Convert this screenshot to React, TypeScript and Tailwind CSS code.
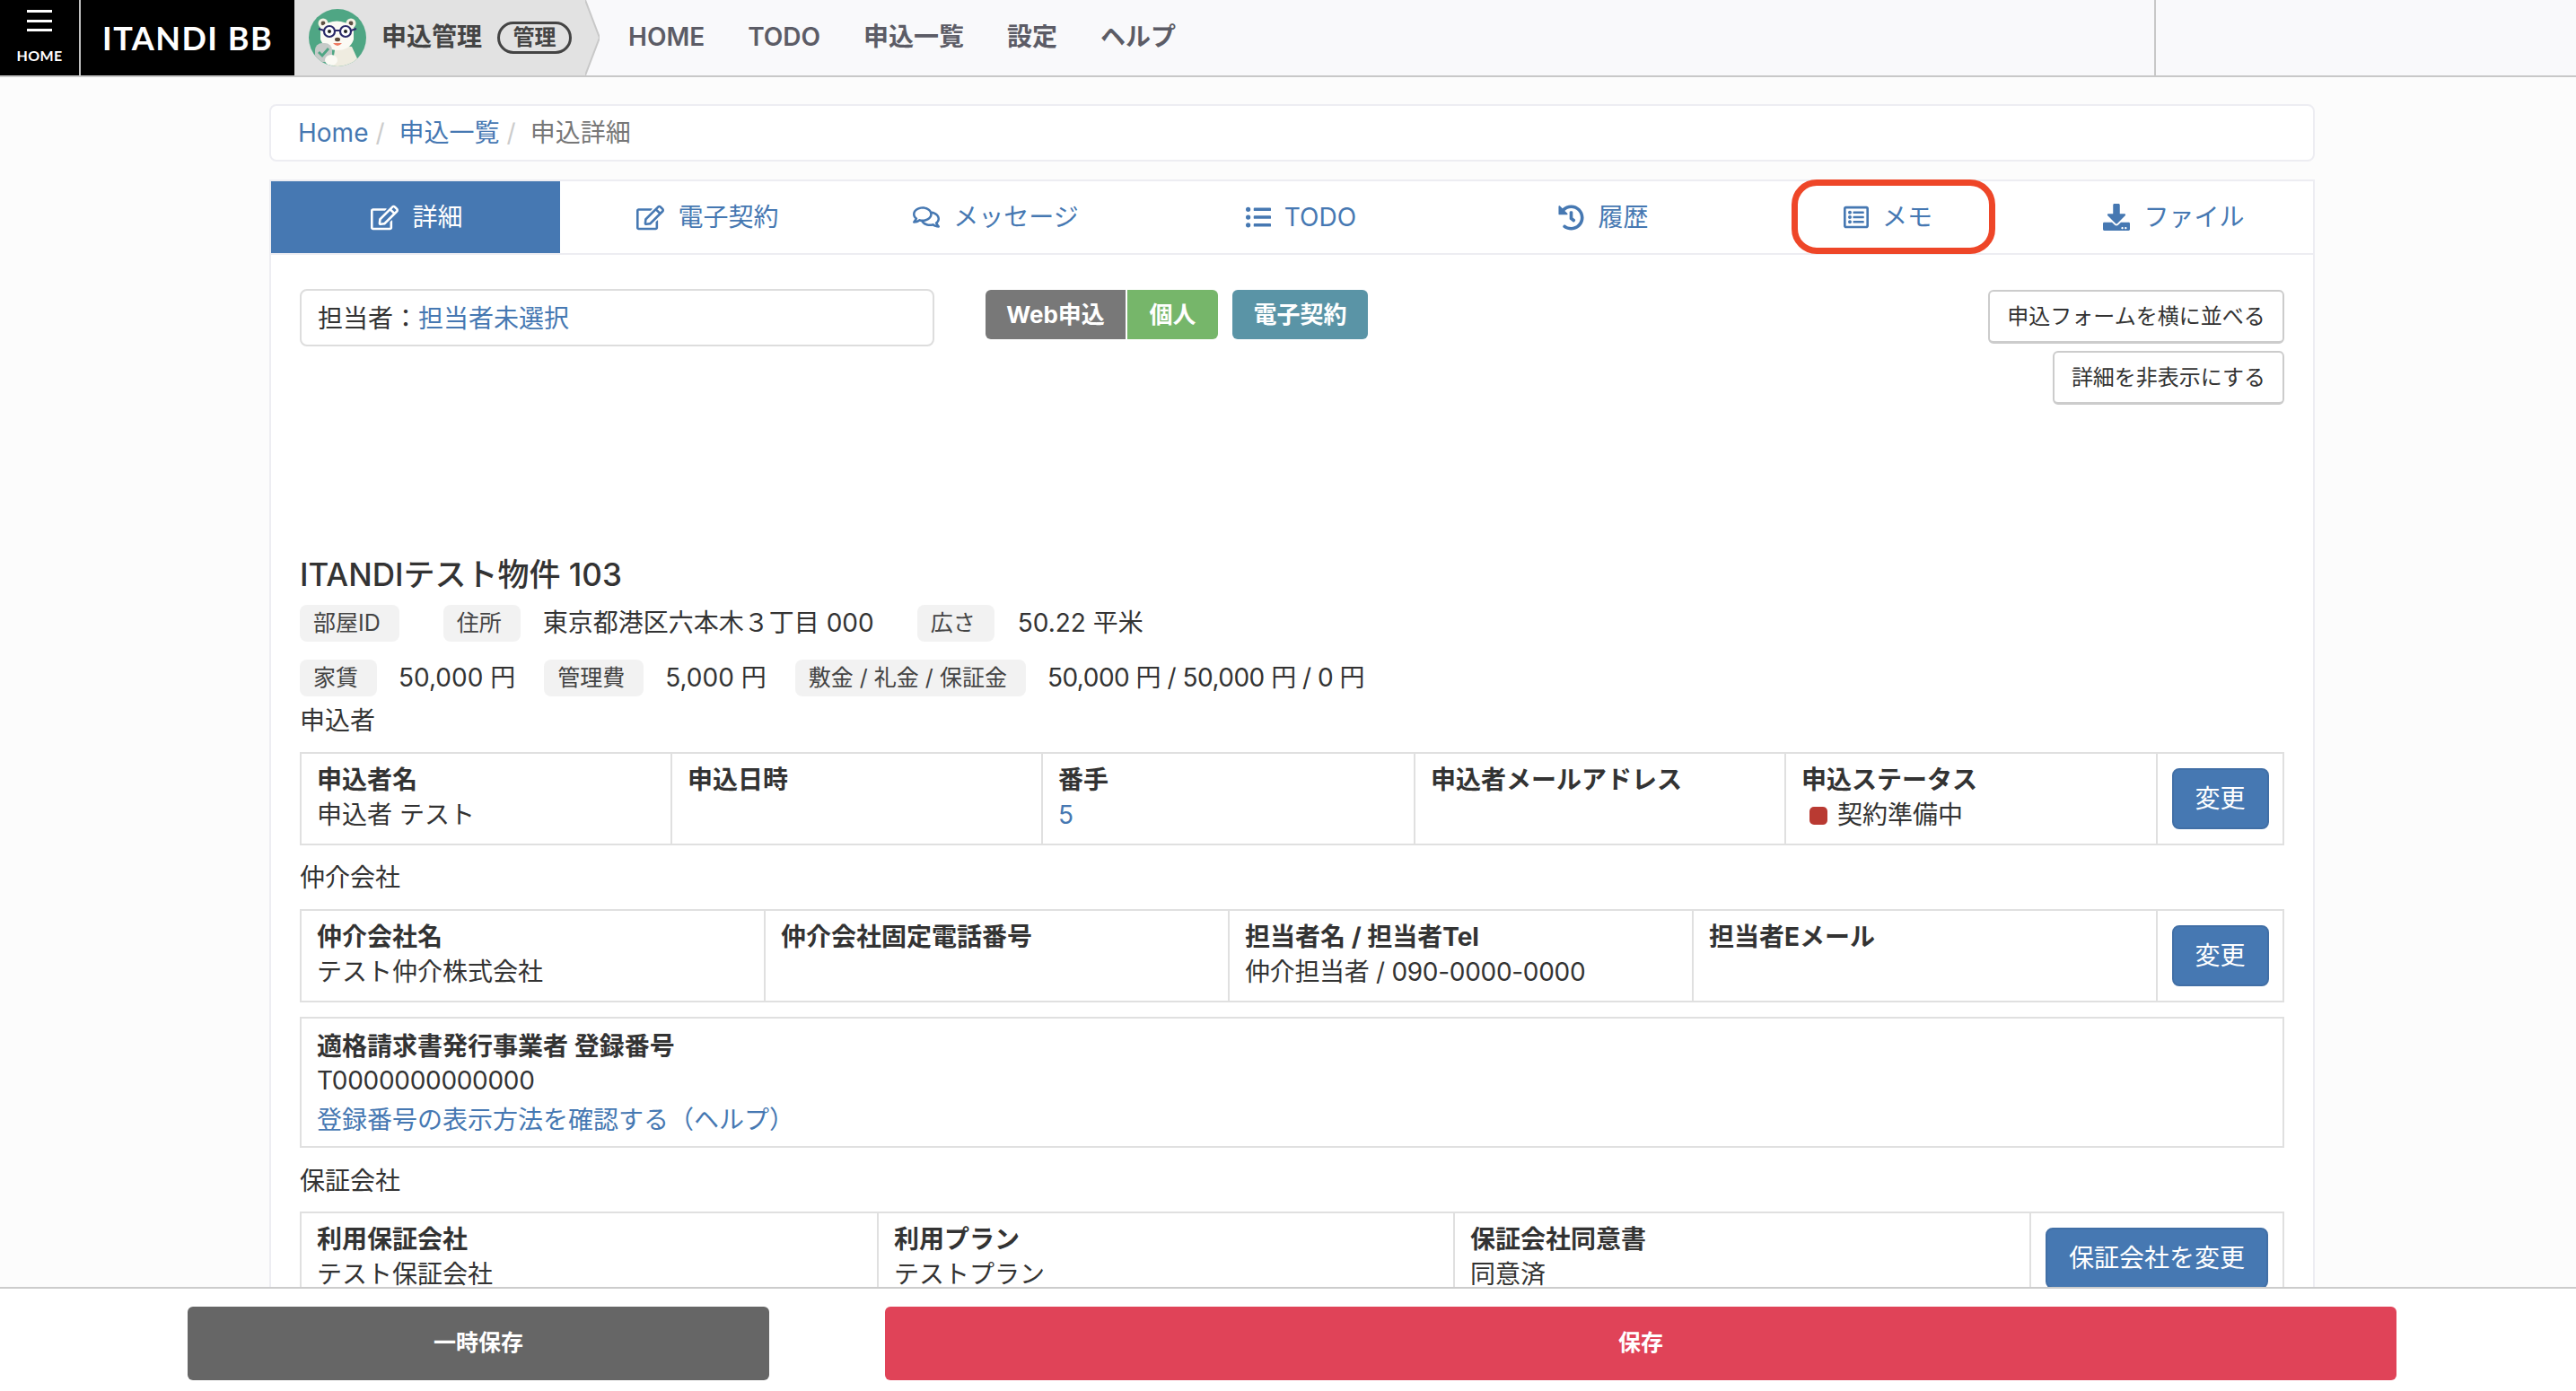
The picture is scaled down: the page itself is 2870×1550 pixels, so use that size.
import React from "react";
import { FaRegEdit, FaRegComments, FaListUl, FaHistory, FaRegListAlt, FaDownload } from "react-icons/fa";

const font = "font-['Inter','Noto_Sans_CJK_JP',sans-serif]";

function Bear() {
  return (
    <svg viewBox="0 0 64 64" className="w-[64px] h-[64px] shrink-0">
      <defs>
        <clipPath id="c"><circle cx="32" cy="32" r="32" /></clipPath>
      </defs>
      <g clipPath="url(#c)">
        <rect width="64" height="64" fill="#4fa684" />
        <path d="M30 40 L48 42 L58 64 L26 64 Z" fill="#efece0" />
        <circle cx="16" cy="16" r="5.5" fill="#f4f1e4" />
        <circle cx="16" cy="16" r="2.4" fill="#5c4f42" />
        <circle cx="47" cy="16" r="5.5" fill="#f4f1e4" />
        <circle cx="47" cy="16" r="2.4" fill="#5c4f42" />
        <path d="M13 20 Q31 7 50 20 L50 34 Q46 46 32 46 Q18 46 13 34 Z" fill="#fbfaf4" />
        <circle cx="23" cy="25" r="6" fill="#fff" stroke="#2b2a6a" strokeWidth="2.2" />
        <circle cx="41" cy="25" r="6" fill="#fff" stroke="#2b2a6a" strokeWidth="2.2" />
        <path d="M29 24 H35 M11 22 L17 24 M47 24 L53 22" stroke="#2b2a6a" strokeWidth="2" fill="none" />
        <circle cx="23" cy="25" r="2" fill="#222" />
        <circle cx="41" cy="25" r="2" fill="#222" />
        <ellipse cx="32" cy="34" rx="3" ry="2.2" fill="#5c4a3c" />
        <path d="M27 38 Q32 44 37 38 Z" fill="#ee7a62" />
        <rect x="7" y="38" width="19" height="21" rx="8" fill="#c6cac8" />
        <path d="M11 48 L15 52 L22 44" stroke="#4fa684" strokeWidth="2.8" fill="none" />
        <ellipse cx="25" cy="57" rx="7" ry="6" fill="#fbfaf4" />
      </g>
    </svg>
  );
}

function Tag({ children }: { children: React.ReactNode }) {
  return (
    <span className="h-[41px] flex items-center pl-[15px] pr-[21px] pt-[2px] rounded-[8px] bg-[#f2f2f2] text-[25px] text-[#444] whitespace-nowrap">
      {children}
    </span>
  );
}

function Val({ children, className = "" }: { children: React.ReactNode; className?: string }) {
  return <span className={"text-[28px] text-[#333] whitespace-nowrap " + className}>{children}</span>;
}

function Cell({ title, children, className }: { title: string; children?: React.ReactNode; className: string }) {
  return (
    <div className={"px-[17px] pt-[10px] border-r-2 border-[#e0e0e0] leading-[39px] " + className}>
      <div className="font-bold text-[28px] text-[#333] whitespace-nowrap">{title}</div>
      {children && <div className="text-[28px] text-[#333] whitespace-nowrap">{children}</div>}
    </div>
  );
}

function BlueBtn({ children, className }: { children: React.ReactNode; className: string }) {
  return (
    <button className={"rounded-[8px] bg-[#4678b2] border-2 border-[#416fa6] text-white text-[28px] " + className}>
      {children}
    </button>
  );
}

const tabs = [
  { label: "詳細", icon: <FaRegEdit className="text-[31px]" />, active: true },
  { label: "電子契約", icon: <FaRegEdit className="text-[31px]" /> },
  { label: "メッセージ", icon: <FaRegComments className="text-[30px]" /> },
  { label: "TODO", icon: <FaListUl className="text-[28px]" /> },
  { label: "履歴", icon: <FaHistory className="text-[29px]" /> },
  { label: "メモ", icon: <FaRegListAlt className="text-[28px]" />, mark: true },
  { label: "ファイル", icon: <FaDownload className="text-[30px]" /> },
];

export default function App() {
  return (
    <div className={"h-screen flex flex-col overflow-hidden bg-[#fcfcfc] text-[#333] " + font}>
      <header className="h-[86px] shrink-0 flex bg-[#f9f9fb] border-b-2 border-[#c8c8c8]">
        <div className="w-[90px] flex flex-col items-center bg-black border-r-2 border-[#c0c0c0]">
          <div className="mt-[11px] w-[28px] flex flex-col gap-[7.5px]">
            <div className="h-[3px] bg-white" />
            <div className="h-[3px] bg-white" />
            <div className="h-[3px] bg-white" />
          </div>
          <div className="mt-[19px] text-[16px] leading-[16px] font-bold text-white tracking-[0.3px] font-['Lato',sans-serif]">HOME</div>
        </div>
        <div className="w-[238px] flex items-center pl-[24px] bg-black text-white text-[36px] font-bold tracking-[1.5px] font-['Lato',sans-serif] whitespace-nowrap">
          ITANDI BB
        </div>
        <div className="relative w-[340px] flex items-center pl-[16px] bg-[#e2e2e2]">
          <Bear />
          <span className="ml-[17px] pb-[2px] text-[28px] font-bold text-[#444] whitespace-nowrap">申込管理</span>
          <span className="ml-[17px] w-[83px] h-[36px] flex items-center justify-center border-[3px] border-[#444] rounded-[18px] text-[24px] font-bold text-[#444]">管理</span>
          <svg viewBox="0 0 16 84" preserveAspectRatio="none" className="absolute left-[324px] top-0 w-[16px] h-[84px]">
            <path d="M0 0 L16 42 L0 84 L16 84 L16 0 Z" fill="#f9f9fb" />
            <path d="M0 0 L16 42 L0 84" fill="none" stroke="#c8c8c8" strokeWidth="2" />
          </svg>
        </div>
        <nav className="ml-[32px] pb-[2px] flex items-center gap-[48px] text-[28px] font-semibold text-[#5c5c66] whitespace-nowrap">
          <span>HOME</span>
          <span>TODO</span>
          <span>申込一覧</span>
          <span>設定</span>
          <span>ヘルプ</span>
        </nav>
        <div className="flex-1" />
        <div className="w-[470px] border-l-2 border-[#c8c8c8]" />
      </header>

      <main className="flex-1 min-h-0 overflow-hidden pl-[300px] pr-[291px] pt-[30px]">
        <div className="h-[64px] flex items-center px-[30px] bg-white border-2 border-[#ededf2] rounded-[8px] text-[28px]">
          <span className="text-[#4678b2]">Home</span>
          <span className="ml-[8px] mr-[16px] text-[#ccc]">/</span>
          <span className="text-[#4678b2]">申込一覧</span>
          <span className="ml-[8px] mr-[16px] text-[#ccc]">/</span>
          <span className="text-[#777]">申込詳細</span>
        </div>

        <div className="mt-[20px] h-[1300px] bg-white border-2 border-[#ededf2]">
          <div className="grid grid-cols-[322px_326px_316px_364px_310px_324px_1fr] h-[82px] border-b-2 border-[#ededf2]">
            {tabs.map((t) => (
              <div
                key={t.label}
                className={
                  "relative h-[80px] flex items-center justify-center gap-[15px] pl-[3px] text-[28px] " +
                  (t.active ? "bg-[#4678b2] text-white" : "text-[#4678b2]")
                }
              >
                {t.icon}
                <span>{t.label}</span>
                {t.mark && (
                  <div className="absolute left-[56px] top-[-2px] w-[227px] h-[83px] border-[7px] border-[#ee4628] rounded-[28px]" />
                )}
              </div>
            ))}
          </div>

          <div className="px-[32px] pt-[38px]">
            <div className="flex h-[131px] items-start">
              <div className="w-[707px] h-[64px] flex items-center px-[18px] pt-[1px] border-2 border-[#ddd] rounded-[8px] text-[28px]">
                <span>担当者：</span>
                <span className="text-[#4678b2]">担当者未選択</span>
              </div>
              <div className="ml-[57px] mt-[1px] flex text-[26px] font-bold text-white">
                <span className="w-[156px] h-[55px] flex items-center justify-center bg-[#787878] rounded-l-[6px]">Web申込</span>
                <span className="ml-[2px] w-[101px] h-[55px] flex items-center justify-center bg-[#76b66a] rounded-r-[6px]">個人</span>
                <span className="ml-[16px] w-[151px] h-[55px] flex items-center justify-center bg-[#5a94a6] rounded-[6px]">電子契約</span>
              </div>
              <div className="ml-auto mt-[1px] flex flex-col items-end gap-[8px] text-[24px]">
                <button className="w-[330px] h-[60px] bg-white border-2 border-b-[3px] border-[#ccc] rounded-[6px]">申込フォームを横に並べる</button>
                <button className="w-[258px] h-[60px] bg-white border-2 border-b-[3px] border-[#ccc] rounded-[6px]">詳細を非表示にする</button>
              </div>
            </div>

            <h2 className="mt-[163px] text-[35px] leading-[48px] font-medium text-[#333] whitespace-nowrap">ITANDIテスト物件 103</h2>

            <div className="mt-[9px] flex items-center">
              <Tag>部屋ID</Tag>
              <span className="ml-[49px]"><Tag>住所</Tag></span>
              <span className="ml-[25px]"><Val>東京都港区六本木３丁目 000</Val></span>
              <span className="ml-[48px]"><Tag>広さ</Tag></span>
              <span className="ml-[26px]"><Val>50.22 平米</Val></span>
            </div>
            <div className="mt-[19px] flex items-center">
              <Tag>家賃</Tag>
              <span className="ml-[24px]"><Val>50,000 円</Val></span>
              <span className="ml-[32px]"><Tag>管理費</Tag></span>
              <span className="ml-[24px]"><Val>5,000 円</Val></span>
              <span className="ml-[32px]"><Tag>敷金 / 礼金 / 保証金</Tag></span>
              <span className="ml-[24px]"><Val className="tracking-[-0.5px]">50,000 円 / 50,000 円 / 0 円</Val></span>
            </div>

            <div className="mt-[9px] text-[28px] leading-[36px]">申込者</div>
            <div className="mt-[17px] h-[104px] flex border-2 border-[#e0e0e0]">
              <Cell title="申込者名" className="w-[413px]">申込者 テスト</Cell>
              <Cell title="申込日時" className="w-[413px]" />
              <Cell title="番手" className="w-[415px]"><span className="text-[#4678b2]">5</span></Cell>
              <Cell title="申込者メールアドレス" className="w-[413px]" />
              <Cell title="申込ステータス" className="w-[414px]">
                <span className="flex items-center gap-[11px]">
                  <span className="ml-[9px] w-[20px] h-[20px] rounded-[5px] bg-[#b93a32]" />
                  契約準備中
                </span>
              </Cell>
              <div className="flex-1 flex items-center justify-center">
                <BlueBtn className="w-[108px] h-[68px]">変更</BlueBtn>
              </div>
            </div>

            <div className="mt-[18px] text-[28px] leading-[36px]">仲介会社</div>
            <div className="mt-[17px] h-[104px] flex border-2 border-[#e0e0e0]">
              <Cell title="仲介会社名" className="w-[517px]">テスト仲介株式会社</Cell>
              <Cell title="仲介会社固定電話番号" className="w-[517px]" />
              <Cell title="担当者名 / 担当者Tel" className="w-[517px]"><span className="tracking-[-0.3px]">仲介担当者 / 090-0000-0000</span></Cell>
              <Cell title="担当者Eメール" className="w-[517px]" />
              <div className="flex-1 flex items-center justify-center">
                <BlueBtn className="w-[108px] h-[68px]">変更</BlueBtn>
              </div>
            </div>

            <div className="mt-[16px] h-[146px] px-[17px] pt-[12px] border-2 border-[#e0e0e0] text-[28px] leading-[38px]">
              <div className="font-bold">適格請求書発行事業者 登録番号</div>
              <div className="tracking-[-0.3px]">T0000000000000</div>
              <div className="mt-[6px] text-[#4678b2]">登録番号の表示方法を確認する（ヘルプ）</div>
            </div>

            <div className="mt-[19px] text-[28px] leading-[36px]">保証会社</div>
            <div className="mt-[16px] h-[104px] flex border-2 border-[#e0e0e0]">
              <Cell title="利用保証会社" className="w-[643px]">テスト保証会社</Cell>
              <Cell title="利用プラン" className="w-[642px]">テストプラン</Cell>
              <Cell title="保証会社同意書" className="w-[642px]">同意済</Cell>
              <div className="flex-1 flex items-center justify-center">
                <BlueBtn className="w-[248px] h-[68px]">保証会社を変更</BlueBtn>
              </div>
            </div>
          </div>
        </div>
      </main>

      <footer className="h-[116px] shrink-0 flex pl-[209px] pr-[200px] pt-[20px] gap-[129px] bg-white border-t-2 border-[#ccc]">
        <button className="w-[648px] h-[82px] rounded-[6px] bg-[#666] text-white text-[25px] font-bold">一時保存</button>
        <button className="flex-1 h-[82px] rounded-[6px] bg-[#e04358] text-white text-[25px] font-bold">保存</button>
      </footer>
    </div>
  );
}
